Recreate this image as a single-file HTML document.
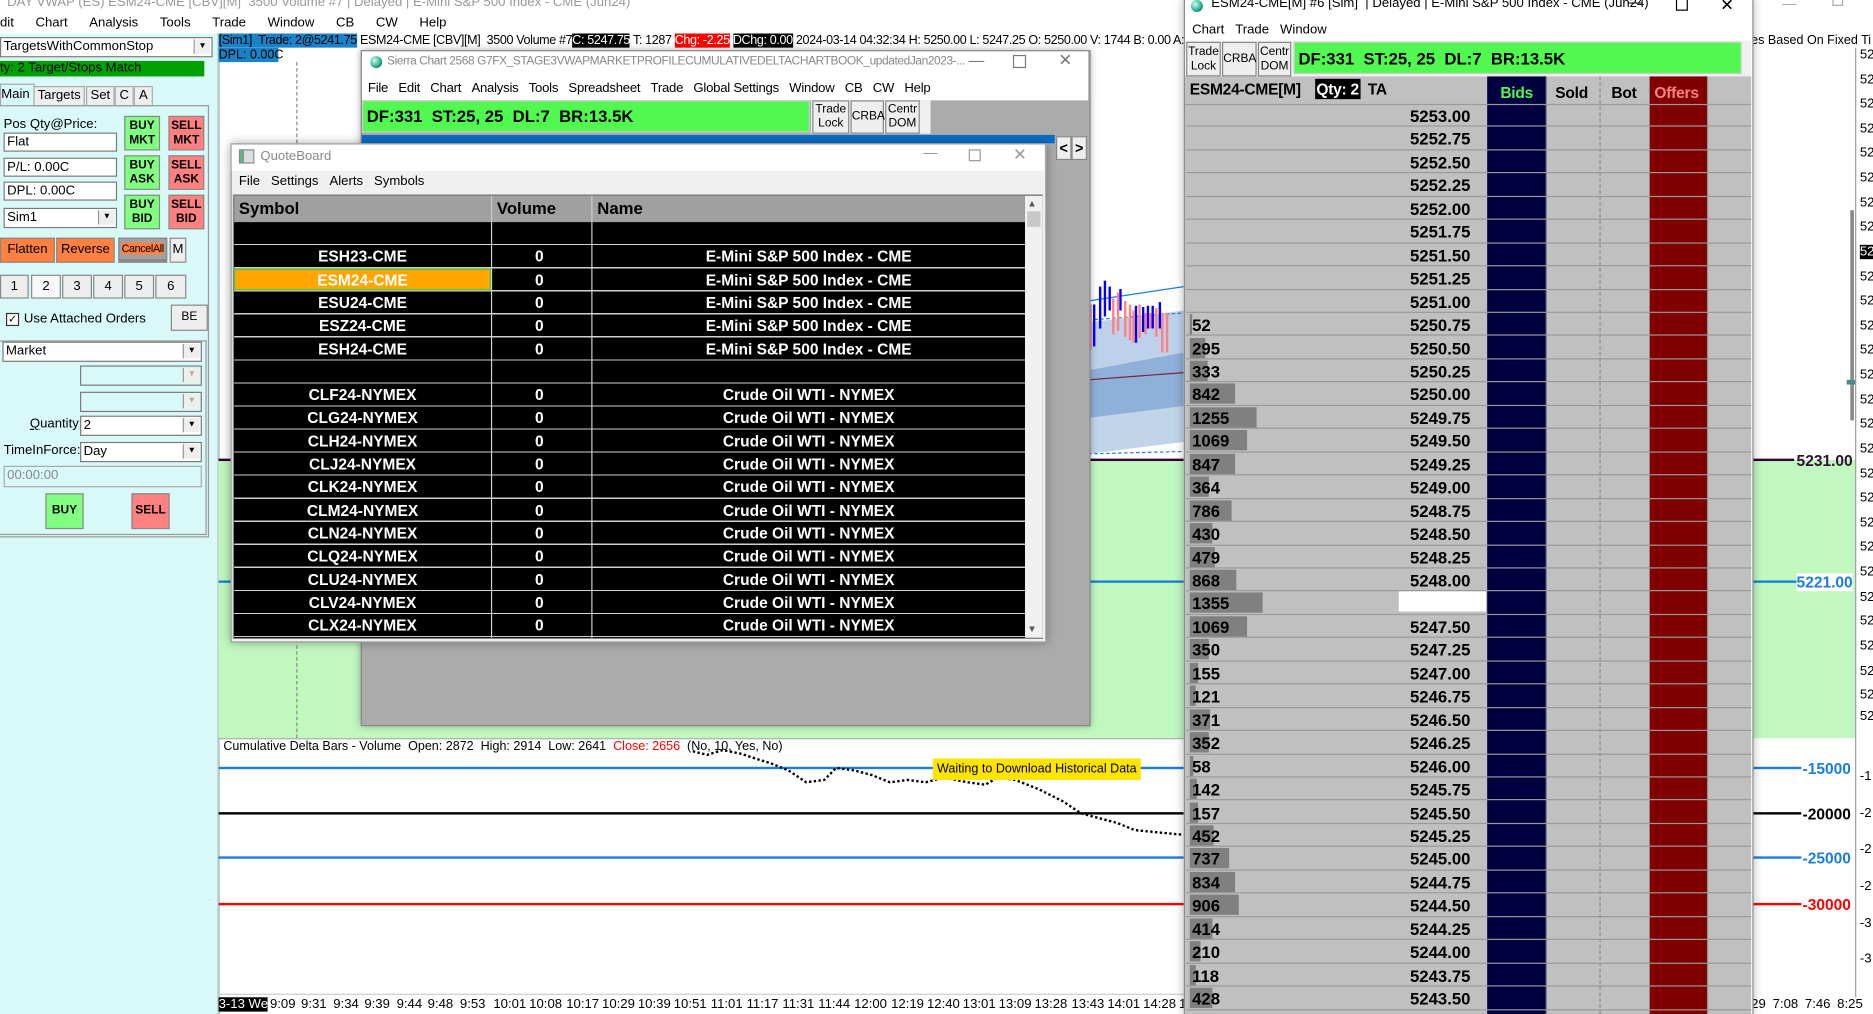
<!DOCTYPE html>
<html><head><meta charset="utf-8">
<style>
html,body{margin:0;padding:0;width:1873px;height:1014px;overflow:hidden;background:#fff}
#st{position:absolute;left:0;top:0;width:1568px;height:849px;transform:scale(1.19452,1.19435);transform-origin:0 0;font-family:"Liberation Sans",sans-serif;font-size:11px;color:#000;overflow:hidden;background:#fff}
.a{position:absolute;white-space:nowrap}
.btn{position:absolute;border:1px solid #888;box-sizing:border-box;text-align:center;font-weight:bold;font-size:10px;line-height:12px}
.inp{position:absolute;background:#fff;border:1px solid #7a7a7a;box-sizing:border-box;height:16px;line-height:14px;padding-left:2px;font-size:11px}
.dd{position:absolute;right:1px;top:1px;width:13px;height:12px;background:#eee;border-left:1px solid #999;font-size:7px;text-align:center;line-height:12px}
.r{position:absolute;left:993px;width:473px;height:19.45px;border-bottom:1px solid #9a9a9a;box-sizing:border-box;font-weight:bold;font-size:14px;line-height:20px}
.r .p{position:absolute;right:235px;top:0}
.r .v{position:absolute;left:5px;top:0}
.r .b{position:absolute;left:3px;top:1px;height:17px;background:#808080}
.ax{position:absolute;left:1557px;font-size:11px}
.tl{position:absolute;top:835px;font-size:11px}
</style></head><body><div id="st">

<div class="a" style="left:6px;top:-4px;color:#999;font-size:11px">DAY VWAP (ES) ESM24-CME [CBV][M]&nbsp; 3500 Volume #7 | Delayed | E-Mini S&amp;P 500 Index - CME (Jun24)</div>
<div class="a" style="left:0;top:13px;font-size:11px;word-spacing:6px">dit &nbsp;Chart &nbsp;Analysis &nbsp;Tools &nbsp;Trade &nbsp;Window &nbsp;CB &nbsp;CW &nbsp;Help</div>

<!-- left panel -->
<div class="a" style="left:0;top:28px;width:182px;height:821px;background:#d9f8f8;border-right:2px solid #b8c8c8"></div>
<div class="inp" style="left:0;top:31px;width:178px;height:17px">TargetsWithCommonStop<div class="dd">▼</div></div>
<div class="a" style="left:0;top:51px;width:171px;height:13px;background:#00a000;line-height:13px;font-size:11px">ty: 2 Target/Stops Match</div>
<div class="a" style="left:0;top:70px;width:27px;height:18px;background:#d9f8f8;border:1px solid #aaa;border-bottom:none;line-height:16px">Main</div>
<div class="a" style="left:28px;top:72px;width:41px;height:15px;background:#eee;border:1px solid #aaa;line-height:15px;text-align:center">Targets</div>
<div class="a" style="left:72px;top:72px;width:22px;height:15px;background:#eee;border:1px solid #aaa;line-height:15px;text-align:center">Set</div>
<div class="a" style="left:96px;top:72px;width:14px;height:15px;background:#eee;border:1px solid #aaa;line-height:15px;text-align:center">C</div>
<div class="a" style="left:112px;top:72px;width:14px;height:15px;background:#eee;border:1px solid #aaa;line-height:15px;text-align:center">A</div>
<div class="a" style="left:0;top:88px;width:175px;height:362px;border:1px solid #999;border-left:none;box-sizing:border-box"></div>
<div class="a" style="left:3px;top:98px">Pos Qty@Price:</div>
<div class="inp" style="left:3px;top:111px;width:95px">Flat</div>
<div class="inp" style="left:3px;top:132px;width:95px">P/L: 0.00C</div>
<div class="inp" style="left:3px;top:152px;width:95px">DPL: 0.00C</div>
<div class="inp" style="left:3px;top:174px;width:95px;height:17px">Sim1<div class="dd">▼</div></div>
<div class="btn" style="left:104px;top:97px;width:30px;height:29px;background:#80ff80;padding-top:2px">BUY<br>MKT</div>
<div class="btn" style="left:141px;top:97px;width:30px;height:29px;background:#ff8080;padding-top:2px">SELL<br>MKT</div>
<div class="btn" style="left:104px;top:130px;width:30px;height:29px;background:#80ff80;padding-top:2px">BUY<br>ASK</div>
<div class="btn" style="left:141px;top:130px;width:30px;height:29px;background:#ff8080;padding-top:2px">SELL<br>ASK</div>
<div class="btn" style="left:104px;top:163px;width:30px;height:29px;background:#80ff80;padding-top:2px">BUY<br>BID</div>
<div class="btn" style="left:141px;top:163px;width:30px;height:29px;background:#ff8080;padding-top:2px">SELL<br>BID</div>
<div class="btn" style="left:0;top:199px;width:46px;height:21px;background:#ff8040;line-height:19px;font-size:11px;font-weight:normal">Flatten</div>
<div class="btn" style="left:47px;top:199px;width:49px;height:21px;background:#ff8040;line-height:19px;font-size:11px;font-weight:normal">Reverse</div>
<div class="btn" style="left:99px;top:199px;width:41px;height:21px;background:#a0a0a0;line-height:17px;font-size:9px;font-weight:normal;border-bottom:3px solid #888;letter-spacing:-0.3px"><span style="background:#ff8040">CancelAll</span></div>
<div class="btn" style="left:142px;top:199px;width:14px;height:21px;background:#eee;line-height:19px;font-size:11px;font-weight:normal">M</div>
<div class="a" style="left:0;top:230px;width:156px;height:20px">
<div class="btn" style="left:0;top:0;width:24px;height:20px;background:#eee;font-weight:normal;font-size:11px;line-height:18px">1</div>
<div class="btn" style="left:26px;top:0;width:25px;height:20px;background:#f8f8f8;font-weight:normal;font-size:11px;line-height:18px">2</div>
<div class="btn" style="left:52px;top:0;width:25px;height:20px;background:#eee;font-weight:normal;font-size:11px;line-height:18px">3</div>
<div class="btn" style="left:78px;top:0;width:25px;height:20px;background:#eee;font-weight:normal;font-size:11px;line-height:18px">4</div>
<div class="btn" style="left:104px;top:0;width:25px;height:20px;background:#eee;font-weight:normal;font-size:11px;line-height:18px">5</div>
<div class="btn" style="left:130px;top:0;width:26px;height:20px;background:#eee;font-weight:normal;font-size:11px;line-height:18px">6</div>
</div>
<div class="a" style="left:5px;top:262px;width:9px;height:9px;border:1px solid #333;background:#fff;font-size:9px;line-height:9px;text-align:center">✓</div>
<div class="a" style="left:20px;top:261px">Use Attached Orders</div>
<div class="btn" style="left:143px;top:255px;width:31px;height:22px;background:#eee;font-weight:normal;line-height:20px">BE</div>
<div class="a" style="left:0;top:285px;width:173px;height:163px;border:1px solid #999;border-left:none;box-sizing:border-box"></div>
<div class="inp" style="left:2px;top:286px;width:167px;height:17px">Market<div class="dd">▼</div></div>
<div class="inp" style="left:67px;top:306px;width:102px;height:17px;background:#d9f8f8"><div class="dd" style="color:#aaa">▼</div></div>
<div class="inp" style="left:67px;top:328px;width:102px;height:17px;background:#d9f8f8"><div class="dd" style="color:#aaa">▼</div></div>
<div class="a" style="left:25px;top:349px"><u>Q</u>uantity:</div>
<div class="inp" style="left:67px;top:348px;width:102px;height:17px">2<div class="dd">▼</div></div>
<div class="a" style="left:3px;top:371px">TimeInForce:</div>
<div class="inp" style="left:67px;top:370px;width:102px;height:17px">Day<div class="dd">▼</div></div>
<div class="inp" style="left:3px;top:390px;width:166px;height:18px;background:#d9f8f8;color:#888;border-color:#aaa">00:00:00</div>
<div class="btn" style="left:38px;top:413px;width:32px;height:30px;background:#80ff80;line-height:28px">BUY</div>
<div class="btn" style="left:110px;top:413px;width:32px;height:30px;background:#ff8080;line-height:28px">SELL</div>

<!-- chart area -->
<div class="a" style="left:183px;top:385px;width:808px;height:233px;background:#c0f8c0"></div>
<div class="a" style="left:1466px;top:385px;width:87px;height:233px;background:#c0f8c0"></div>
<div class="a" style="left:248px;top:52px;height:566px;border-left:1px dashed #888"></div>
<div class="a" style="left:183px;top:384px;width:808px;height:2px;background:#300030"></div>
<div class="a" style="left:183px;top:486px;width:808px;height:2px;background:#1a7ee0"></div>
<div class="a" style="left:1466px;top:384px;width:36px;height:2px;background:#300030"></div>
<div class="a" style="left:1466px;top:486px;width:38px;height:2px;background:#1a7ee0"></div>
<div class="a" style="left:1504px;top:378px;font-weight:bold;font-size:13px;color:#301030">5231.00</div>
<div class="a" style="left:1504px;top:480px;font-weight:bold;font-size:13px;color:#1a7ee0;background:#fff">5221.00</div>
<svg class="a" style="left:911px;top:200px" width="80" height="200">
<path d="M0 150 L80 140 L80 170 L0 180Z" fill="#c0d4ea"/>
<path d="M0 110 L80 95 L80 140 L0 150Z" fill="#8fb0d8"/>
<path d="M0 70 L80 60 L80 95 L0 110Z" fill="#bdd2ea"/>
<path d="M0 118 L80 112" stroke="#802040" stroke-width="1"/>
<path d="M0 52 L80 40" stroke="#1a7ee0" stroke-width="1"/>
<path d="M0 68 L80 62" stroke="#1a7ee0" stroke-width="1" stroke-dasharray="3,2"/>
<path d="M0 180 L80 178" stroke="#1a7ee0" stroke-width="1" stroke-dasharray="3,2"/>
<g stroke="#0000ff" stroke-width="2"><path d="M5 55V90M10 40V75M14 35V65M18 40V60M27 42V60M40 56V87M46 57V78M50 56V75M54 56V75M60 53V75"/></g>
<g stroke="#ff8080" stroke-width="2"><path d="M2 55V93M21 50V80M25 45V77M31 52V82M35 55V85M38 60V87M43 55V83M48 62V80M52 62V75M57 58V82M62 62V95M66 62V95"/></g>
</svg>

<div class="a" style="left:183px;top:28px;width:808px;height:12px;line-height:12px;font-size:10.5px;letter-spacing:-0.3px;overflow:hidden"><span style="background:#1a82c8">[Sim1] &nbsp;Trade: 2@5241.75</span> ESM24-CME [CBV][M] &nbsp;3500 Volume #7<span style="background:#000;color:#fff">C: 5247.75</span> T: 1287 <span style="background:#f00;color:#fff">Chg: -2.25</span> <span style="background:#000;color:#fff">DChg: 0.00</span> 2024-03-14 04:32:34 H: 5250.00 L: 5247.25 O: 5250.00 V: 1744 B: 0.00 A: 0.00 O</div>
<div class="a" style="left:183px;top:40px;width:50px;height:12px;background:#1a82c8;line-height:12px;font-size:10.5px">DPL: 0.00C</div>

<!-- Sierra chart window -->
<div class="a" style="left:302px;top:42px;width:609px;height:564px;background:#ababab;border:1px solid #888;box-shadow:0 0 6px rgba(0,0,0,.35)"></div>
<div class="a" style="left:303px;top:43px;width:608px;height:41px;background:#fff"></div>
<div class="a" style="left:310px;top:47px;width:10px;height:10px;border-radius:50%;background:radial-gradient(circle at 35% 35%,#cfe,#2a8 60%,#146)"></div>
<div class="a" style="left:324px;top:46px;color:#888;font-size:10px;letter-spacing:-0.35px">Sierra Chart 2568 G7FX_STAGE3VWAPMARKETPROFILECUMULATIVEDELTACHARTBOOK_updatedJan2023-...</div>
<div class="a" style="left:811px;top:43px;color:#777;font-size:13px">—</div>
<div class="a" style="left:848px;top:46px;width:9px;height:9px;border:1px solid #777"></div>
<div class="a" style="left:886px;top:42px;color:#777;font-size:14px">✕</div>
<div class="a" style="left:308px;top:68px;font-size:11px;letter-spacing:-0.2px">File &nbsp;&nbsp;Edit &nbsp;&nbsp;Chart &nbsp;&nbsp;Analysis &nbsp;&nbsp;Tools &nbsp;&nbsp;Spreadsheet &nbsp;&nbsp;Trade &nbsp;&nbsp;Global Settings &nbsp;&nbsp;Window &nbsp;&nbsp;CB &nbsp;&nbsp;CW &nbsp;&nbsp;Help</div>
<div class="a" style="left:303px;top:84px;width:375px;height:27px;background:#50f850;font-weight:bold;font-size:14px;line-height:25px;padding-left:3px;box-sizing:border-box;border:1px solid #ccc">DF:331 &nbsp;ST:25, 25 &nbsp;DL:7 &nbsp;BR:13.5K</div>
<div class="a" style="left:679px;top:84px;width:100px;height:28px;background:#f0f0f0"></div>
<div class="btn" style="left:680px;top:84px;width:31px;height:28px;background:#eee;font-weight:normal;font-size:10px;line-height:12px;padding-top:1px">Trade<br>Lock</div>
<div class="btn" style="left:712px;top:84px;width:28px;height:28px;background:#eee;font-weight:normal;font-size:10px;line-height:26px">CRBA</div>
<div class="btn" style="left:741px;top:84px;width:29px;height:28px;background:#eee;font-weight:normal;font-size:10px;line-height:12px;padding-top:1px">Centr<br>DOM</div>
<div class="a" style="left:303px;top:113px;width:580px;height:7px;background:#0a6ec8"></div>
<div class="btn" style="left:884px;top:114px;width:13px;height:20px;background:#eee;font-size:12px;line-height:18px">&lt;</div>
<div class="btn" style="left:897px;top:114px;width:13px;height:20px;background:#eee;font-size:12px;line-height:18px">&gt;</div>

<!-- QuoteBoard -->
<div class="a" style="left:193px;top:120px;width:681px;height:416px;background:#f0f0f0;border:1px solid #999;box-shadow:0 0 8px rgba(0,0,0,.35)"></div>
<div class="a" style="left:194px;top:121px;width:680px;height:22px;background:#fff"></div>
<div class="a" style="left:200px;top:125px;width:11px;height:10px;border:1px solid #888;background:linear-gradient(90deg,#6a8 30%,#ddd 30%)"></div>
<div class="a" style="left:218px;top:125px;color:#888;font-size:11px">QuoteBoard</div>
<div class="a" style="left:773px;top:121px;color:#999;font-size:12px">—</div>
<div class="a" style="left:811px;top:125px;width:8px;height:8px;border:1px solid #999"></div>
<div class="a" style="left:848px;top:121px;color:#999;font-size:14px">✕</div>
<div class="a" style="left:200px;top:146px;font-size:11px">File &nbsp;&nbsp;Settings &nbsp;&nbsp;Alerts &nbsp;&nbsp;Symbols</div>
<div class="a" style="left:195px;top:163px;width:678px;height:372px;background:#000;border:1px solid #888;box-sizing:border-box"></div>
<div class="a" style="left:196px;top:164px;width:662px;height:22px;background:#a0a0a0;font-weight:bold;font-size:14px;line-height:21px;border-bottom:1px solid #888">
<span class="a" style="left:4px">Symbol</span><span class="a" style="left:220px">Volume</span><span class="a" style="left:304px">Name</span>
<div class="a" style="left:215px;top:0;width:1px;height:22px;background:#ccc"></div><div class="a" style="left:299px;top:0;width:1px;height:22px;background:#ccc"></div></div>
<div class="a" style="left:858px;top:164px;width:15px;height:370px;background:#f0f0f0"></div>
<div class="a" style="left:860px;top:166px;font-size:8px;color:#555">▲</div>
<div class="a" style="left:860px;top:522px;font-size:8px;color:#555">▼</div>
<div class="a" style="left:860px;top:177px;width:11px;height:13px;background:#c8c8c8"></div>
<div class="a" style="left:196px;top:186px;width:662px;height:348px;background:repeating-linear-gradient(#000 0,#000 18.3px,#d0d0d0 18.3px,#d0d0d0 19.3px)"></div>
<div class="a" style="left:411px;top:186px;width:1px;height:348px;background:#d0d0d0"></div>
<div class="a" style="left:495px;top:186px;width:1px;height:348px;background:#d0d0d0"></div>
<div class="a" style="left:196px;top:225px;width:215px;height:18px;background:#ffa500;border:1px solid #4c4;box-sizing:border-box"></div>
<div class="a" style="left:196px;top:186px;width:662px;color:#fff;font-weight:bold;font-size:13px;line-height:19.3px">
<div class="a" style="top:19.3px;left:0;width:215px;text-align:center">ESH23-CME</div><div class="a" style="top:19.3px;left:216px;width:79px;text-align:center">0</div><div class="a" style="top:19.3px;left:300px;width:362px;text-align:center">E-Mini S&amp;P 500 Index - CME</div>
<div class="a" style="top:38.6px;left:0;width:215px;text-align:center">ESM24-CME</div><div class="a" style="top:38.6px;left:216px;width:79px;text-align:center">0</div><div class="a" style="top:38.6px;left:300px;width:362px;text-align:center">E-Mini S&amp;P 500 Index - CME</div>
<div class="a" style="top:57.9px;left:0;width:215px;text-align:center">ESU24-CME</div><div class="a" style="top:57.9px;left:216px;width:79px;text-align:center">0</div><div class="a" style="top:57.9px;left:300px;width:362px;text-align:center">E-Mini S&amp;P 500 Index - CME</div>
<div class="a" style="top:77.2px;left:0;width:215px;text-align:center">ESZ24-CME</div><div class="a" style="top:77.2px;left:216px;width:79px;text-align:center">0</div><div class="a" style="top:77.2px;left:300px;width:362px;text-align:center">E-Mini S&amp;P 500 Index - CME</div>
<div class="a" style="top:96.5px;left:0;width:215px;text-align:center">ESH24-CME</div><div class="a" style="top:96.5px;left:216px;width:79px;text-align:center">0</div><div class="a" style="top:96.5px;left:300px;width:362px;text-align:center">E-Mini S&amp;P 500 Index - CME</div>
<div class="a" style="top:135.1px;left:0;width:215px;text-align:center">CLF24-NYMEX</div><div class="a" style="top:135.1px;left:216px;width:79px;text-align:center">0</div><div class="a" style="top:135.1px;left:300px;width:362px;text-align:center">Crude Oil WTI - NYMEX</div>
<div class="a" style="top:154.4px;left:0;width:215px;text-align:center">CLG24-NYMEX</div><div class="a" style="top:154.4px;left:216px;width:79px;text-align:center">0</div><div class="a" style="top:154.4px;left:300px;width:362px;text-align:center">Crude Oil WTI - NYMEX</div>
<div class="a" style="top:173.7px;left:0;width:215px;text-align:center">CLH24-NYMEX</div><div class="a" style="top:173.7px;left:216px;width:79px;text-align:center">0</div><div class="a" style="top:173.7px;left:300px;width:362px;text-align:center">Crude Oil WTI - NYMEX</div>
<div class="a" style="top:193px;left:0;width:215px;text-align:center">CLJ24-NYMEX</div><div class="a" style="top:193px;left:216px;width:79px;text-align:center">0</div><div class="a" style="top:193px;left:300px;width:362px;text-align:center">Crude Oil WTI - NYMEX</div>
<div class="a" style="top:212.3px;left:0;width:215px;text-align:center">CLK24-NYMEX</div><div class="a" style="top:212.3px;left:216px;width:79px;text-align:center">0</div><div class="a" style="top:212.3px;left:300px;width:362px;text-align:center">Crude Oil WTI - NYMEX</div>
<div class="a" style="top:231.6px;left:0;width:215px;text-align:center">CLM24-NYMEX</div><div class="a" style="top:231.6px;left:216px;width:79px;text-align:center">0</div><div class="a" style="top:231.6px;left:300px;width:362px;text-align:center">Crude Oil WTI - NYMEX</div>
<div class="a" style="top:250.9px;left:0;width:215px;text-align:center">CLN24-NYMEX</div><div class="a" style="top:250.9px;left:216px;width:79px;text-align:center">0</div><div class="a" style="top:250.9px;left:300px;width:362px;text-align:center">Crude Oil WTI - NYMEX</div>
<div class="a" style="top:270.2px;left:0;width:215px;text-align:center">CLQ24-NYMEX</div><div class="a" style="top:270.2px;left:216px;width:79px;text-align:center">0</div><div class="a" style="top:270.2px;left:300px;width:362px;text-align:center">Crude Oil WTI - NYMEX</div>
<div class="a" style="top:289.5px;left:0;width:215px;text-align:center">CLU24-NYMEX</div><div class="a" style="top:289.5px;left:216px;width:79px;text-align:center">0</div><div class="a" style="top:289.5px;left:300px;width:362px;text-align:center">Crude Oil WTI - NYMEX</div>
<div class="a" style="top:308.8px;left:0;width:215px;text-align:center">CLV24-NYMEX</div><div class="a" style="top:308.8px;left:216px;width:79px;text-align:center">0</div><div class="a" style="top:308.8px;left:300px;width:362px;text-align:center">Crude Oil WTI - NYMEX</div>
<div class="a" style="top:328.1px;left:0;width:215px;text-align:center">CLX24-NYMEX</div><div class="a" style="top:328.1px;left:216px;width:79px;text-align:center">0</div><div class="a" style="top:328.1px;left:300px;width:362px;text-align:center">Crude Oil WTI - NYMEX</div>
</div>

<!-- lower pane -->
<div class="a" style="left:183px;top:618px;width:808px;height:1px;background:#aaa"></div>
<div class="a" style="left:187px;top:619px;font-size:10.5px">Cumulative Delta Bars - Volume &nbsp;Open: 2872 &nbsp;High: 2914 &nbsp;Low: 2641 &nbsp;<span style="color:#f00">Close: 2656</span> &nbsp;(No, 10, Yes, No)</div>
<div class="a" style="left:183px;top:642px;width:808px;height:2px;background:#1a7ee0"></div>
<div class="a" style="left:183px;top:680px;width:808px;height:2px;background:#000"></div>
<div class="a" style="left:183px;top:717px;width:808px;height:2px;background:#1a7ee0"></div>
<div class="a" style="left:183px;top:756px;width:808px;height:2px;background:#f00"></div>
<svg class="a" style="left:570px;top:625px" width="421" height="80"><polyline fill="none" stroke="#000" stroke-width="2" stroke-dasharray="2,2" points="10,4 22,7 35,3 50,6 62,10 75,14 90,20 105,30 120,28 130,18 145,20 160,24 175,30 190,28 205,30 220,26 240,30 255,32 265,26 280,28 300,36 320,46 335,56 350,60 365,64 380,70 400,72 421,74"/></svg>
<div class="a" style="left:781px;top:635px;width:174px;height:18px;background:#ffe400;font-size:10.5px;line-height:18px;text-align:center">Waiting to Download Historical Data</div>
<div class="a" style="left:1466px;top:642px;width:42px;height:2px;background:#1a7ee0"></div>
<div class="a" style="left:1466px;top:680px;width:42px;height:2px;background:#000"></div>
<div class="a" style="left:1466px;top:717px;width:42px;height:2px;background:#1a7ee0"></div>
<div class="a" style="left:1466px;top:756px;width:42px;height:2px;background:#f00"></div>
<div class="a" style="left:1509px;top:636px;font-weight:bold;font-size:13px;color:#1a7ee0">-15000</div>
<div class="a" style="left:1509px;top:674px;font-weight:bold;font-size:13px">-20000</div>
<div class="a" style="left:1509px;top:711px;font-weight:bold;font-size:13px;color:#1a7ee0">-25000</div>
<div class="a" style="left:1509px;top:750px;font-weight:bold;font-size:13px;color:#f00">-30000</div>

<!-- time axis -->
<div class="a" style="left:183px;top:832px;width:808px;height:1px;background:#ccc"></div>
<div class="tl" style="left:183px;background:#000;color:#fff">3-13 We</div>
<div class="tl" style="left:226px">9:09</div><div class="tl" style="left:252px">9:31</div><div class="tl" style="left:279px">9:34</div><div class="tl" style="left:305px">9:39</div><div class="tl" style="left:332px">9:44</div><div class="tl" style="left:358px">9:48</div><div class="tl" style="left:385px">9:53</div><div class="tl" style="left:413px">10:01</div><div class="tl" style="left:443px">10:08</div><div class="tl" style="left:474px">10:17</div><div class="tl" style="left:504px">10:29</div><div class="tl" style="left:534px">10:39</div><div class="tl" style="left:564px">10:51</div><div class="tl" style="left:595px">11:01</div><div class="tl" style="left:625px">11:17</div><div class="tl" style="left:655px">11:31</div><div class="tl" style="left:685px">11:44</div><div class="tl" style="left:715px">12:00</div><div class="tl" style="left:746px">12:19</div><div class="tl" style="left:776px">12:40</div><div class="tl" style="left:806px">13:01</div><div class="tl" style="left:836px">13:09</div><div class="tl" style="left:866px">13:28</div><div class="tl" style="left:897px">13:43</div><div class="tl" style="left:927px">14:01</div><div class="tl" style="left:957px">14:28</div><div class="tl" style="left:987px">1</div>
<div class="tl" style="left:1466px">29</div><div class="tl" style="left:1484px">7:08</div><div class="tl" style="left:1511px">7:46</div><div class="tl" style="left:1538px">8:25</div>

<!-- right axis -->
<div class="a" style="left:1492px;top:-4px;color:#aaa;font-size:12px">—</div>
<div class="a" style="left:1534px;top:-4px;width:7px;height:7px;border:1px solid #aaa"></div>
<div class="a" style="left:1466px;top:28px;font-size:10.5px">es Based On Fixed Ti</div>
<div class="a" style="left:1553px;top:40px;width:1px;height:795px;background:#999"></div>
<div class="a" style="left:1549px;top:176px;width:3px;height:176px;background:#888"></div>
<div class="a" style="left:1546px;top:318px;width:7px;height:4px;background:#4a8a8a"></div>
<div class="ax" style="top:40px">52</div><div class="ax" style="top:61px">52</div><div class="ax" style="top:81px">52</div><div class="ax" style="top:102px">52</div><div class="ax" style="top:122px">52</div><div class="ax" style="top:143px">52</div><div class="ax" style="top:164px">52</div><div class="ax" style="top:184px">52</div><div class="ax" style="top:205px;background:#000;color:#fff">52</div><div class="ax" style="top:226px">52</div><div class="ax" style="top:246px">52</div><div class="ax" style="top:267px">52</div><div class="ax" style="top:287px">52</div><div class="ax" style="top:308px">52</div><div class="ax" style="top:329px">52</div><div class="ax" style="top:349px">52</div><div class="ax" style="top:370px">52</div><div class="ax" style="top:391px">52</div><div class="ax" style="top:411px">52</div><div class="ax" style="top:432px">52</div><div class="ax" style="top:452px">52</div><div class="ax" style="top:473px">52</div><div class="ax" style="top:494px">52</div><div class="ax" style="top:514px">52</div><div class="ax" style="top:535px">52</div><div class="ax" style="top:556px">52</div><div class="ax" style="top:576px">52</div><div class="ax" style="top:594px">52</div>
<div class="ax" style="top:644px">-1</div><div class="ax" style="top:675px">-2</div><div class="ax" style="top:705px">-2</div><div class="ax" style="top:736px">-2</div><div class="ax" style="top:767px">-3</div><div class="ax" style="top:797px">-3</div>

<!-- DOM window -->
<div class="a" style="left:991px;top:-2px;width:475px;height:851px;background:#fff;border-left:1px solid #888;border-right:1px solid #888;box-shadow:0 0 8px rgba(0,0,0,.3)"></div>
<div class="a" style="left:997px;top:0px;width:10px;height:10px;border-radius:50%;background:radial-gradient(circle at 35% 35%,#cfe,#2a8 60%,#146)"></div>
<div class="a" style="left:1014px;top:-3px;font-size:11px">ESM24-CME[M] #6 [Sim] &nbsp;| Delayed | E-Mini S&amp;P 500 Index - CME (Jun24)</div>
<div class="a" style="left:1363px;top:-5px;font-size:12px">—</div>
<div class="a" style="left:1403px;top:-1px;width:8px;height:8px;border:1px solid #000"></div>
<div class="a" style="left:1440px;top:-4px;font-size:14px">✕</div>
<div class="a" style="left:998px;top:19px;font-size:11px">Chart &nbsp;&nbsp;Trade &nbsp;&nbsp;Window</div>
<div class="a" style="left:992px;top:34px;width:474px;height:30px;background:#f0f0f0"></div>
<div class="btn" style="left:993px;top:35px;width:29px;height:29px;background:#eee;font-weight:normal;font-size:10px;line-height:12px;padding-top:2px">Trade<br>Lock</div>
<div class="btn" style="left:1023px;top:35px;width:29px;height:29px;background:#eee;font-weight:normal;font-size:10px;line-height:27px">CRBA</div>
<div class="btn" style="left:1053px;top:35px;width:28px;height:29px;background:#eee;font-weight:normal;font-size:10px;line-height:12px;padding-top:2px">Centr<br>DOM</div>
<div class="a" style="left:1083px;top:35px;width:375px;height:27px;background:#50f850;font-weight:bold;font-size:14px;line-height:26px;padding-left:3px;box-sizing:border-box;border:1px solid #ccc">DF:331 &nbsp;ST:25, 25 &nbsp;DL:7 &nbsp;BR:13.5K</div>
<div class="a" style="left:992px;top:64px;width:474px;height:785px;background:#c0c0c0"></div>
<div class="a" style="left:1245px;top:64px;width:50px;height:785px;background:#000040"></div>
<div class="a" style="left:1381px;top:64px;width:48px;height:785px;background:#800000"></div>
<div class="a" style="left:1339px;top:64px;height:785px;border-left:1px dashed #888"></div>
<div class="a" style="left:1294px;top:64px;width:1px;height:785px;background:#909090"></div>
<div class="a" style="left:1429px;top:64px;width:1px;height:785px;background:#909090"></div>
<div class="a" style="left:992px;top:64px;width:474px;height:23px;border-bottom:1px solid #9a9a9a;font-weight:bold;font-size:13px;line-height:22px;letter-spacing:-0.2px">
<span class="a" style="left:4px;top:0">ESM24-CME[M]</span><span class="a" style="left:109px;top:2px;background:#000;color:#fff;line-height:17px;padding:0 1px">Qty: 2</span><span class="a" style="left:153px;top:0;width:16px;overflow:hidden">TA: $</span>
<span class="a" style="left:264px;top:3px;color:#50f850">Bids</span><span class="a" style="left:310px;top:3px">Sold</span><span class="a" style="left:357px;top:3px">Bot</span><span class="a" style="left:393px;top:3px;color:#ff8080">Offers</span></div>
<div class="a" style="left:1171px;top:495px;width:73px;height:17px;background:#fff"></div>

<div class="r" style="top:87px"><span class="p">5253.00</span></div>
<div class="r" style="top:106.45px"><span class="p">5252.75</span></div>
<div class="r" style="top:125.9px"><span class="p">5252.50</span></div>
<div class="r" style="top:145.35px"><span class="p">5252.25</span></div>
<div class="r" style="top:164.8px"><span class="p">5252.00</span></div>
<div class="r" style="top:184.25px"><span class="p">5251.75</span></div>
<div class="r" style="top:203.7px"><span class="p">5251.50</span></div>
<div class="r" style="top:223.15px"><span class="p">5251.25</span></div>
<div class="r" style="top:242.6px"><span class="p">5251.00</span></div>
<div class="r" style="top:262.05px"><i class="b" style="width:2px"></i><span class="v">52</span><span class="p">5250.75</span></div>
<div class="r" style="top:281.5px"><i class="b" style="width:13px"></i><span class="v">295</span><span class="p">5250.50</span></div>
<div class="r" style="top:300.95px"><i class="b" style="width:15px"></i><span class="v">333</span><span class="p">5250.25</span></div>
<div class="r" style="top:320.4px"><i class="b" style="width:38px"></i><span class="v">842</span><span class="p">5250.00</span></div>
<div class="r" style="top:339.85px"><i class="b" style="width:56px"></i><span class="v">1255</span><span class="p">5249.75</span></div>
<div class="r" style="top:359.3px"><i class="b" style="width:48px"></i><span class="v">1069</span><span class="p">5249.50</span></div>
<div class="r" style="top:378.75px"><i class="b" style="width:38px"></i><span class="v">847</span><span class="p">5249.25</span></div>
<div class="r" style="top:398.2px"><i class="b" style="width:16px"></i><span class="v">364</span><span class="p">5249.00</span></div>
<div class="r" style="top:417.65px"><i class="b" style="width:35px"></i><span class="v">786</span><span class="p">5248.75</span></div>
<div class="r" style="top:437.1px"><i class="b" style="width:19px"></i><span class="v">430</span><span class="p">5248.50</span></div>
<div class="r" style="top:456.55px"><i class="b" style="width:21px"></i><span class="v">479</span><span class="p">5248.25</span></div>
<div class="r" style="top:476px"><i class="b" style="width:39px"></i><span class="v">868</span><span class="p">5248.00</span></div>
<div class="r" style="top:495.45px"><i class="b" style="width:61px"></i><span class="v">1355</span></div>
<div class="r" style="top:514.9px"><i class="b" style="width:48px"></i><span class="v">1069</span><span class="p">5247.50</span></div>
<div class="r" style="top:534.35px"><i class="b" style="width:16px"></i><span class="v">350</span><span class="p">5247.25</span></div>
<div class="r" style="top:553.8px"><i class="b" style="width:7px"></i><span class="v">155</span><span class="p">5247.00</span></div>
<div class="r" style="top:573.25px"><i class="b" style="width:5px"></i><span class="v">121</span><span class="p">5246.75</span></div>
<div class="r" style="top:592.7px"><i class="b" style="width:17px"></i><span class="v">371</span><span class="p">5246.50</span></div>
<div class="r" style="top:612.15px"><i class="b" style="width:16px"></i><span class="v">352</span><span class="p">5246.25</span></div>
<div class="r" style="top:631.6px"><i class="b" style="width:3px"></i><span class="v">58</span><span class="p">5246.00</span></div>
<div class="r" style="top:651.05px"><i class="b" style="width:6px"></i><span class="v">142</span><span class="p">5245.75</span></div>
<div class="r" style="top:670.5px"><i class="b" style="width:7px"></i><span class="v">157</span><span class="p">5245.50</span></div>
<div class="r" style="top:689.95px"><i class="b" style="width:20px"></i><span class="v">452</span><span class="p">5245.25</span></div>
<div class="r" style="top:709.4px"><i class="b" style="width:33px"></i><span class="v">737</span><span class="p">5245.00</span></div>
<div class="r" style="top:728.85px"><i class="b" style="width:38px"></i><span class="v">834</span><span class="p">5244.75</span></div>
<div class="r" style="top:748.3px"><i class="b" style="width:41px"></i><span class="v">906</span><span class="p">5244.50</span></div>
<div class="r" style="top:767.75px"><i class="b" style="width:19px"></i><span class="v">414</span><span class="p">5244.25</span></div>
<div class="r" style="top:787.2px"><i class="b" style="width:9px"></i><span class="v">210</span><span class="p">5244.00</span></div>
<div class="r" style="top:806.65px"><i class="b" style="width:5px"></i><span class="v">118</span><span class="p">5243.75</span></div>
<div class="r" style="top:826.1px"><i class="b" style="width:19px"></i><span class="v">428</span><span class="p">5243.50</span></div>

</div></body></html>
